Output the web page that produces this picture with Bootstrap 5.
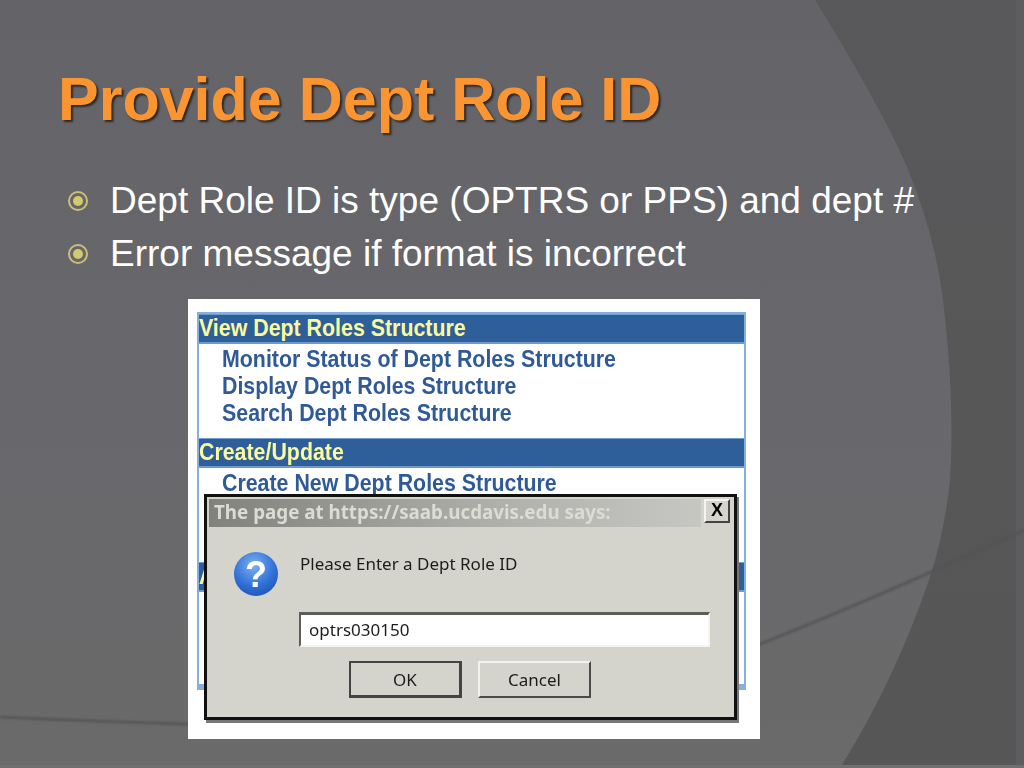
<!DOCTYPE html>
<html lang="en">
<head>
    <meta charset="UTF-8">
    <meta name="viewport" content="width=device-width, initial-scale=1.0">
    <title>Provide Dept Role ID</title>
    <link href="https://cdn.jsdelivr.net/npm/bootstrap@5.3.0/dist/css/bootstrap.min.css" rel="stylesheet">
    <style>
        html, body { margin: 0; background: #67666b; }
        .slide {
            position: relative;
            width: 1024px;
            height: 768px;
            overflow: hidden;
            padding: 63px 0 0 58px;
            font-family: "Liberation Sans", Arial, sans-serif;
        }
        .backdrop { position: absolute; left: 0; top: 0; }
        .crease { filter: blur(1px); }
        .slide-title {
            position: relative;
            margin: 0;
            font-size: 61px;
            line-height: 72px;
            font-weight: 700;
            color: #fb9531;
            text-shadow: 2px 2px 2px #2a292b;
        }
        .points {
            position: relative;
            margin: 39px 0 0 10px;
            padding: 0;
            list-style: none;
            color: #fff;
            font-size: 37px;
            line-height: 53px;
        }
        .points li { gap: 22px; }
        .dot { flex: none; }
        .shot {
            position: relative;
            width: 572px;
            height: 440px;
            margin: 19px 0 0 130px;
            padding: 13px 14px 0 9px;
            background: #fff;
        }
        .menu-box {
            height: 378px;
            border: 2px solid #85afdc;
            border-bottom-width: 6px;
            filter: blur(.5px);
        }
        .menu-head {
            height: 30px;
            background: #2f5f9b;
            border-top: 1px solid #6f9bcc;
            border-bottom: 2px solid #6f9bcc;
            color: #fbfb9c;
            font-size: 24px;
            line-height: 26px;
            font-weight: 700;
        }
        .menu-links {
            padding: 1px 0 0 23px;
            color: #2f5a96;
            font-size: 24px;
            line-height: 27px;
            font-weight: 700;
            white-space: nowrap;
        }
        .squeeze { transform: scaleX(.89); transform-origin: left center; }
        .links-first { height: 94px; }
        .links-second { height: 94px; }
        .dialog {
            position: absolute;
            left: 16px;
            top: 195px;
            width: 533px;
            height: 226px;
            padding: 2px;
            background: #d4d4cc;
            border: 3px solid #111;
            box-shadow: 2px 3px 0 #77777a;
            font-family: "Noto Sans", Tahoma, sans-serif;
            color: #1c1c1c;
            font-size: 17px;
            filter: blur(.4px);
        }
        .dialog-bar { height: 29px; gap: 3px; }
        .dialog-title {
            width: 492px;
            height: 28px;
            padding-left: 5px;
            background: linear-gradient(90deg, #81817d, #b0b0ac 60%, #c6c6c2);
            color: #dcdcd4;
            font-size: 18.8px;
            line-height: 26px;
            font-weight: 700;
            white-space: nowrap;
        }
        .dialog-close {
            width: 26px;
            height: 24px;
            background: #d4d4cc;
            border: 2px solid;
            border-color: #f4f4f0 #444 #444 #f4f4f0;
            color: #000;
            font: 700 18px/19px "Liberation Sans", sans-serif;
            text-align: center;
        }
        .dialog-body { height: 84px; padding: 23px 0 0 24px; gap: 21px; }
        .dialog-msg { line-height: 26px; white-space: nowrap; }
        .dialog-input {
            width: 411px;
            height: 35px;
            margin-left: 90px;
            padding-left: 8px;
            background: #fff;
            border: 2px solid;
            border-color: #5e5e58 #f4f4f0 #f4f4f0 #5e5e58;
            border-top-width: 3px;
            line-height: 29px;
        }
        .dialog-btns { margin: 14px 0 0 140px; gap: 16px; }
        .win-btn {
            width: 113px;
            height: 37px;
            background: #d4d4cc;
            border: 2px solid;
            border-color: #f2f2ee #4a4a48 #4a4a48 #f2f2ee;
            text-align: center;
            line-height: 33px;
        }
        .win-btn-default { border-color: #444; border-right-width: 3px; border-bottom-width: 3px; }
    </style>
</head>
<body>
    <div class="slide">
        <svg class="backdrop" width="1024" height="768" viewBox="0 0 1024 768">
            <defs>
                <linearGradient id="leftFill" x1="0" y1="0" x2="0" y2="1">
                    <stop offset="0" stop-color="#646367"/>
                    <stop offset="0.6" stop-color="#69686c"/>
                    <stop offset="1" stop-color="#6a6a6a"/>
                </linearGradient>
                <linearGradient id="rightFill" x1="0" y1="0" x2="0" y2="1">
                    <stop offset="0" stop-color="#59585a"/>
                    <stop offset="1" stop-color="#565656"/>
                </linearGradient>
            </defs>
            <rect width="1024" height="768" fill="url(#leftFill)"/>
            <path d="M815 0Q880 105 907 167Q935 235 943 300Q955 400 950 480Q945 530 930 577Q895 680 840 768H1024V0Z" fill="url(#rightFill)"/>
            <rect x="1016" width="8" height="768" fill="#5d5c5e"/>
            <path class="crease" d="M0 717C120 722 400 735 520 720C640 700 850 610 1024 530" fill="none" stroke="#545356" stroke-width="2.5"/>
            <rect y="765" width="1024" height="3" fill="#6f6f6f"/>
        </svg>

        <h1 class="slide-title">Provide Dept Role ID</h1>

        <ul class="points">
            <li class="d-flex align-items-center">
                <svg class="dot" width="20" height="20" viewBox="0 0 20 20"><circle cx="10" cy="10" r="9" fill="none" stroke="#c9bf78" stroke-width="2"/><circle cx="10" cy="10" r="5" fill="#d3c96f"/></svg>
                Dept Role ID is type (OPTRS or PPS) and dept #
            </li>
            <li class="d-flex align-items-center">
                <svg class="dot" width="20" height="20" viewBox="0 0 20 20"><circle cx="10" cy="10" r="9" fill="none" stroke="#c9bf78" stroke-width="2"/><circle cx="10" cy="10" r="5" fill="#d3c96f"/></svg>
                Error message if format is incorrect
            </li>
        </ul>

        <div class="shot">
            <div class="menu-box">
                <div class="menu-head"><div class="squeeze">View Dept Roles Structure</div></div>
                <div class="menu-links links-first">
                    <div class="squeeze">Monitor Status of Dept Roles Structure</div>
                    <div class="squeeze">Display Dept Roles Structure</div>
                    <div class="squeeze">Search Dept Roles Structure</div>
                </div>
                <div class="menu-head"><div class="squeeze">Create/Update</div></div>
                <div class="menu-links links-second">
                    <div class="squeeze">Create New Dept Roles Structure</div>
                </div>
                <div class="menu-head"><div class="squeeze">A</div></div>
            </div>

            <div class="dialog">
                <div class="dialog-bar d-flex align-items-start">
                    <div class="dialog-title">The page at https://saab.ucdavis.edu says:</div>
                    <div class="dialog-close">X</div>
                </div>
                <div class="dialog-body d-flex align-items-start">
                    <svg width="46" height="46" viewBox="0 0 46 46" class="flex-shrink-0">
                        <defs>
                            <radialGradient id="helpFill" cx="0.45" cy="0.3" r="0.8">
                                <stop offset="0" stop-color="#7fb2f2"/>
                                <stop offset="0.6" stop-color="#2f6fd6"/>
                                <stop offset="1" stop-color="#1d4fae"/>
                            </radialGradient>
                        </defs>
                        <circle cx="23" cy="23" r="22" fill="url(#helpFill)"/>
                        <text x="23" y="36" text-anchor="middle" fill="#fff" font-family="Liberation Sans" font-weight="700" font-size="36">?</text>
                    </svg>
                    <div class="dialog-msg">Please Enter a Dept Role ID</div>
                </div>
                <div class="dialog-input">optrs030150</div>
                <div class="dialog-btns d-flex">
                    <div class="win-btn win-btn-default">OK</div>
                    <div class="win-btn">Cancel</div>
                </div>
            </div>
        </div>
    </div>

    <script src="https://cdn.jsdelivr.net/npm/bootstrap@5.3.0/dist/js/bootstrap.bundle.min.js"></script>
</body>
</html>
